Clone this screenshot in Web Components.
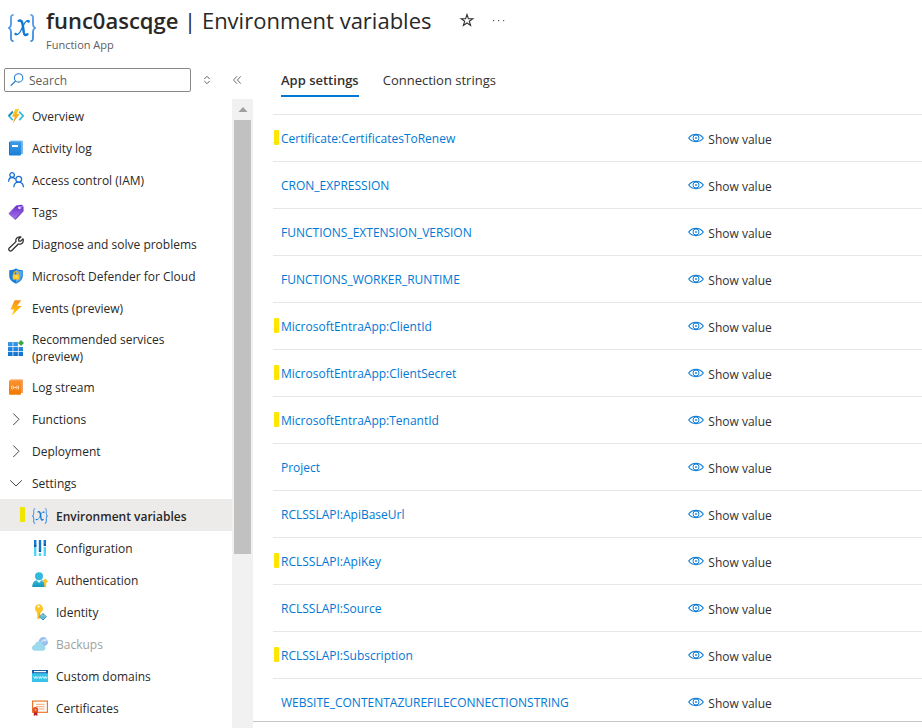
<!DOCTYPE html>
<html lang="en">
<head>
<meta charset="utf-8">
<title>func0ascqge | Environment variables</title>
<style>
  body { margin: 0; background: #fff; color: #292827; font: 12px/16px "Open Sans", "Noto Sans", sans-serif; }
</style>
</head>
<body>
<function-app-page></function-app-page>

<script>
const ICONS = {
  braces: ['0 0 30 30', `<defs><linearGradient id="g" x2="0" y2="1"><stop stop-color="#5ea0ef"/><stop offset="1" stop-color="#3b8be0"/></linearGradient></defs>
    <g fill="none" stroke="url(#g)" stroke-width="2"><path d="M6 1C3.500 1 3.200 2 3.200 4.500V11c0 2-.6 3.200-2.200 4 1.600.8 2.200 2 2.200 4v6.500C3.200 28 3.500 29 6 29"/><path d="M24 1c2.500 0 2.800 1 2.800 3.500V11c0 2 .6 3.200 2.200 4-1.600.8-2.200 2-2.200 4v6.500c0 2.500-.3 3.500-2.800 3.500"/></g>
    <g fill="none" stroke="#0f78d4" stroke-linecap="round"><path stroke-width="2.600" d="M11.500 7.300c2.500-1.200 3.600.6 4.200 4l1.200 8.200c.6 3 1.700 4 3.900 2.200"/><path stroke-width="1.400" d="M22.500 7.600c-2.500-1.400-4.300 1.200-6.300 5.300l-2.400 4.800c-1.900 3.600-3.500 5-5.600 4.200"/></g><circle cx="22" cy="8" r="1.400" fill="#0f78d4"/><circle cx="8.200" cy="21.500" r="1.400" fill="#0f78d4"/>`],
  overview: ['0 0 16 16', `<defs><linearGradient id="g" x2="0" y2="1"><stop stop-color="#ffd02e"/><stop offset="1" stop-color="#f58a00"/></linearGradient></defs><path d="M4.800 3.600.8 7.900l4 4.300M11.200 3.600l4 4.300-4 4.300" fill="none" stroke="#32bedd" stroke-width="1.700"/><path d="M4.800 3.600.8 7.900" stroke="#198ab3" stroke-width="1.700"/><path d="M7.200 1h4L8.700 5.800h3.100L5 15l1.900-6.200H4.200z" fill="url(#g)"/>`],
  activity: ['0 0 16 16', `<defs><linearGradient id="g" x2="0" y2="1"><stop stop-color="#3a9be8"/><stop offset="1" stop-color="#1a7fd6"/></linearGradient></defs><path d="M2.500.5H14a.8.8 0 0 1 .8.8V14H3z" fill="#86c5f0"/><path d="M14 1.500V14" stroke="#5a9fd6"/><rect x="1" y="1.500" width="12" height="14" rx="1" fill="url(#g)"/><path d="M1.500 2.200v12.500" stroke="#1b74c4"/><rect x="4" y="5" width="6" height="2" fill="#fff"/>`],
  access: ['0 0 16 16', `<g fill="none" stroke="#1b6fd1" stroke-width="1.300"><circle cx="4.100" cy="3" r="2.300"/><path d="M.6 9.800C.7 7 2.200 5.500 4 5.500c1.300 0 2.400.6 3.100 1.700"/><circle cx="10.700" cy="7.200" r="2.900"/><path d="M5.800 15.300c.1-3.200 2.200-5.100 4.900-5.100s4.800 1.900 4.700 5.100"/></g>`],
  tags: ['0 0 16 16', `<defs><linearGradient id="g" x2="0" y2="1"><stop stop-color="#6a29cf"/><stop offset="1" stop-color="#a67ae6"/></linearGradient></defs><path d="M8.200 1.400 13.400.7l1.700 1.200.2 5.300-7.600 8.300a.8.800 0 0 1-1.100 0L1 10.200a.8.800 0 0 1 0-1.100z" fill="url(#g)"/><path d="m14 1.200 1.500 1.200v4.800L7.800 15.500l-1-.4 7.200-8z" fill="#7b48c4"/><circle cx="11.500" cy="3.700" r="1.300" fill="#fff"/><path d="M11.500 3.700 15 2" stroke="#b796f9"/>`],
  wrench: ['0 0 16 16', `<path d="M11.500.8c-2.600.1-4.200 2.300-3.500 4.800L1.300 12a1.700 1.700 0 0 0 0 2.500 1.800 1.800 0 0 0 2.500 0L10.300 8c2.600.8 4.900-1 5-3.600 0-.6-.1-1.100-.3-1.600l-2.300 2.300-1.900-.1-.2-2L12.900.9z" fill="none" stroke="#323130" stroke-width="1.300" stroke-linejoin="round"/>`],
  shield: ['0 0 16 16', `<path d="M8 .3c2 1.500 4 1.900 6.800 2v5.200c0 4-3 6.500-6.800 8.200-3.800-1.700-6.800-4.200-6.800-8.200V2.300C4 2.200 6 1.800 8 .3z" fill="#1b7fd6"/><path d="M8 1.400c1.800 1.100 3.500 1.600 5.800 1.700v4.500c0 3.300-2.400 5.500-5.800 7z" fill="#58a8ef"/><path d="M6 7V5.600C6 3 10 3 10 5.600V7" fill="none" stroke="#f2b01e" stroke-width="1.300"/><rect x="4.700" y="6.500" width="6.600" height="5" rx=".6" fill="#ffca28"/><circle cx="8" cy="8.600" r=".8" fill="#fff3b0"/>`],
  bolt: ['0 0 16 16', `<defs><linearGradient id="g" x2="0" y2="1"><stop stop-color="#f78d1e"/><stop offset="1" stop-color="#ffd400"/></linearGradient></defs><path d="M6.600.2h6.600L9.200 6h4.600L3.600 15.800l2.600-6.400H2.500z" fill="url(#g)"/>`],
  grid: ['0 0 16 16', `<defs><linearGradient id="g" gradientUnits="userSpaceOnUse" x1="0" y1="1" x2="0" y2="16"><stop stop-color="#3ba0ea"/><stop offset="1" stop-color="#0f6fcc"/></linearGradient></defs><path d="M0 2h4.600v4.300H0zM5.300 2h4.600v4.300H5.300zM0 7h4.600v4.300H0zM5.300 7h4.600v4.300H5.300zM10.600 7h4.400v4.300h-4.400zM0 12h4.600v4H0zM5.300 12h4.600v4H5.300zM10.600 12h4.400v4h-4.400z" fill="url(#g)"/><path d="m13 0 3 3-3 3-3-3z" fill="#3fa648"/>`],
  log: ['0 0 16 16', `<defs><linearGradient id="g" x2="0" y2="1"><stop stop-color="#fb9230"/><stop offset="1" stop-color="#f07800"/></linearGradient></defs><path d="M2.500.3H14a.8.8 0 0 1 .8.8V14H3z" fill="#f9b57c"/><path d="M14 1v13" stroke="#e08030"/><rect x="1" y="1.300" width="12" height="14.400" rx="1" fill="url(#g)"/><path d="M4.300 6.500c-1 1.200-1 2.700 0 4M5.700 7.200c-.6.8-.6 1.800 0 2.600M9.900 6.500c1 1.200 1 2.700 0 4M8.500 7.200c.6.8.6 1.800 0 2.600" fill="none" stroke="#fff" stroke-width=".9"/><circle cx="7.100" cy="8.500" r=".8" fill="#fff"/>`],
  right: ['0 0 16 16', `<path d="m5.300 2.500 5.700 5.800L5.300 14" fill="none" stroke="#484644" stroke-width="1"/>`],
  down: ['0 0 16 16', `<path d="m2.200 5.300 5.800 5.700 5.800-5.700" fill="none" stroke="#484644" stroke-width="1"/>`],
  config: ['0 0 16 16', `<path d="M2 0h2.400v6H2zM11.600 0H14v4h-2.400zM6.800 0h2.400v10H6.800z" fill="#1577cf"/><path d="M2 7h2.400v9H2zM6.800 13h2.400v3H6.800zM11.600 7H14v9h-2.400z" fill="#50d4f2"/><path d="M2 5h2.400v2H2zM11.600 4H14v2h-2.400zM6.800 10h2.400v2H6.800z" fill="#0b5cab"/>`],
  person: ['0 0 16 16', `<defs><linearGradient id="g" x2="0" y2="1"><stop stop-color="#35bde0"/><stop offset="1" stop-color="#1595bb"/></linearGradient></defs><path d="M.2 15c.2-4 1.600-6.500 4-6.800h5.500c2.300.3 3.400 2.500 3.800 6.800z" fill="url(#g)"/><path d="m4.500 8 2.500 3 2.500-3z" fill="#fff"/><circle cx="7" cy="4.200" r="4" fill="#32b9dc"/><path d="M13.200 6.500 16 9.300l-1.800 1.800v3.200l-1 1.300-1-1.300v-3.200l-1.800-1.800z" fill="#ffc522"/>`],
  key: ['0 0 16 16', `<path d="M6.600.2a4.400 4.400 0 0 1 2.600 7.900L8.400 9v4.600L6.600 15.500l-1.800-1.600.9-1-1-1 1-1-.8-1V8.200A4.400 4.400 0 0 1 6.600.2z" fill="#ffc522"/><circle cx="6.600" cy="2.600" r="1.100" fill="#fff"/><path d="M7.600 9v5" stroke="#e9a000" stroke-width=".8"/><path d="m11 9.500 3.400 3.200L11 16l-3.400-3.200z" fill="#bfe8f7" stroke="#2392be"/><path d="M11 10v5.500M8.300 13h5.400" stroke="#2392be" stroke-width=".8"/>`],
  cloud: ['0 0 16 16', `<path d="M6.500 5.600C7 2.700 9.200 1 11.500 1c2.200 0 3.400 1.500 3.700 3.400.7.600.8 1.600.7 3-1 2-3 2.600-4.500 2.600z" fill="#9cc0ee"/><path d="M9.500 6.500c.5-2.300 2.200-3.300 4-2.400m.3-1.600v2.300h-2.300" fill="none" stroke="#e5f0fb"/><path d="M3.200 14.800C1 14.700 0 13.400 0 11.900c0-1.600 1-2.700 2.700-2.900C3.100 6.900 4.700 5.600 6.700 5.600c2.300 0 4 1.600 4.200 3.700 1.600.2 2.600 1.300 2.600 2.800 0 1.600-1.200 2.700-2.900 2.700z" fill="#9bd9ed"/>`],
  domains: ['0 0 16 16', `<rect y="2" width="16" height="12" rx=".6" fill="#38c4ea"/><path d="M0 2h16v3.200H0z" fill="#1b5fa8"/><path d="M2 3.600h12" stroke="#fff" stroke-width="1.200"/><path d="m1.800 8.500 1 2 1-2 1 2 1-2m.8 0 1 2 .8-2 1 2 1-2m.8 0 1 2 1-2 1 2 1-2" fill="none" stroke="#e5faff" stroke-width=".9"/>`],
  certificate: ['0 0 16 16', `<rect x=".6" y="1.100" width="14.800" height="11.200" fill="#fff" stroke="#e8792b" stroke-width="1.200"/><path d="M4 4.300h8.500M4 6.700h8.500M7 9h5.500" stroke="#f3a66b"/><path d="M1.800 11v5l1.800-1 1.800 1v-5z" fill="#b51e1e"/><circle cx="3.500" cy="9.800" r="2.800" fill="#e64b31"/><circle cx="3.500" cy="9.800" r="1" fill="#ff9e7f"/>`],
  star: ['0 0 16 16', `<path d="m8 2.500 1.400 4.200h4.400L10.300 9.200l1.300 4.300L8 11 4.400 13.500l1.300-4.300L2.200 6.700h4.400z" fill="none" stroke="#323130" stroke-width="1.100"/>`],
  dots: ['0 0 16 16', `<g fill="#605e5c"><rect x="2" y="8" width="1.200" height="1.200"/><rect x="7" y="8" width="1.200" height="1.200"/><rect x="12" y="8" width="1.200" height="1.200"/></g>`],
  search: ['0 0 16 16', `<circle cx="9.600" cy="5.900" r="4.200" fill="none" stroke="#2a7fcb" stroke-width="1.100"/><path d="M6.600 9 1.700 13.800" stroke="#2a7fcb" stroke-width="1.200"/>`],
  sort: ['0 0 16 16', `<path d="m5.300 7 2.700-2.700L10.700 7M5.300 9l2.700 2.700L10.700 9" fill="none" stroke="#605e5c" stroke-width="1"/>`],
  collapse: ['0 0 16 16', `<path d="M8 4.300 4.500 8 8 11.700M11.800 4.300 8.300 8l3.500 3.700" fill="none" stroke="#605e5c" stroke-width=".9"/>`],
  eye: ['0 0 16 16', `<path d="M.7 8C2.500 5.500 5 4.400 8 4.400S13.500 5.500 15.300 8C13.500 10.500 11 11.600 8 11.600S2.500 10.500.7 8z" fill="none" stroke="#1580d8" stroke-width="1.200"/><circle cx="8" cy="8" r="3" fill="none" stroke="#1580d8" stroke-width="1"/><circle cx="8" cy="8" r=".9" fill="#1580d8"/>`],
  arrow: ['0 0 16 16', `<path d="M3.500 10.500h9L8 5.500z" fill="#a0a0a0"/>`]
};

function define(name, render, setup) {
  customElements.define(name, class extends HTMLElement {
    connectedCallback() {
      if (this.shadowRoot) return;
      const template = document.createElement('template');
      template.innerHTML = render(this);
      this.attachShadow({ mode: 'open' }).append(template.content.cloneNode(true));
      if (setup) setup(this);
    }
  });
}

define('az-icon', el => {
  const [box, shapes] = ICONS[el.getAttribute('name')];
  return `<style>:host{display:block;flex:none;width:16px;height:16px}svg{display:block;width:100%;height:100%}</style>
  <svg viewBox="${box}" aria-hidden="true">${shapes}</svg>`;
});

define('az-icon-button', el => `
  <style>
    :host { display: block; flex: none; }
    button { display: block; border: 0; padding: 0; background: none; cursor: pointer; }
  </style>
  <button type="button" aria-label="${el.getAttribute('label')}"><az-icon name="${el.getAttribute('icon')}"></az-icon></button>`);

define('page-header', () => `
  <style>
    :host { display: flex; align-items: flex-start; gap: 10px; padding: 4px 8px 0; height: 56px; }
    az-icon { width: 28px; height: 28px; margin-top: 10px; }
    .row { display: flex; align-items: center; gap: 16px; }
    h1 { margin: 0 11px 0 0; font-size: 22px; line-height: 32px; font-weight: 400; white-space: nowrap; }
    b { font-weight: 600; }
    p { margin: 0; font-size: 11px; line-height: 18px; color: #605e5c; }
  </style>
  <az-icon name="braces"></az-icon>
  <div>
    <div class="row"><h1><b><slot name="app"></slot></b> | <slot name="page"></slot></h1>
      <az-icon-button icon="star" label="Add to favorites"></az-icon-button>
      <az-icon-button icon="dots" label="More"></az-icon-button></div>
    <p><slot name="kind"></slot></p>
  </div>`);

define('menu-search', () => `
  <style>
    :host { display: flex; align-items: center; gap: 8px; padding: 8px 8px 7px 4px; }
    label { flex: 1; min-width: 0; display: flex; align-items: center; gap: 4px; box-sizing: border-box; height: 24px; padding: 0 4px; border: 1px solid #8a8886; border-radius: 2px; }
    input { flex: 1; min-width: 0; border: 0; outline: 0; padding: 1px 0 0; background: none; font: inherit; color: inherit; }
    input::placeholder { color: #605e5c; opacity: 1; }
    div { display: flex; gap: 14px; }
  </style>
  <label><az-icon name="search"></az-icon><input type="text" placeholder="Search" aria-label="Search"></label>
  <div><az-icon-button icon="sort" label="Expand or collapse groups"></az-icon-button>
  <az-icon-button icon="collapse" label="Collapse menu"></az-icon-button></div>`);

define('menu-item', el => `
  <style>
    :host { display: block; position: relative; }
    a { display: flex; align-items: center; gap: 8px; box-sizing: border-box; min-height: 32px; padding: 0 24px 0 8px; color: inherit; text-decoration: none; line-height: 17px; }
    :host([wrap]) a { min-height: 47px; }
    :host([child]) a { padding: 2px 24px 0 32px; }
    :host([current]) a { background: #edebe9; font-weight: 600; }
    :host([disabled]) a { color: #a19f9d; }
    i { position: absolute; left: 20px; top: 8px; width: 5px; height: 15px; background: #efe600; border-radius: 1px; }
  </style>
  <a href="#"${el.hasAttribute('current') ? ' aria-current="page"' : ''}${el.hasAttribute('disabled') ? ' aria-disabled="true"' : ''}><az-icon name="${el.getAttribute('icon')}"></az-icon><span><slot></slot></span></a>
  ${el.hasAttribute('current') ? '<i></i>' : ''}`);

define('menu-scrollbar', () => `
  <style>
    :host { display: flex; flex-direction: column; align-items: stretch; flex: none; width: 17px; padding: 0 2px; background: #f1f1f1; }
    az-icon { align-self: center; height: 21px; }
    .thumb { height: 69%; background: #c1c1c1; }
  </style>
  <az-icon name="arrow"></az-icon><div class="thumb"></div>`);

define('side-menu', () => `
  <style>
    :host { display: flex; flex-direction: column; flex: none; width: 253px; min-height: 0; }
    .body { flex: 1; min-height: 0; display: flex; overflow: hidden; }
    nav { flex: 1; min-width: 0; padding-top: 1px; }
  </style>
  <menu-search></menu-search>
  <div class="body"><nav aria-label="Resource menu"><slot></slot></nav><menu-scrollbar></menu-scrollbar></div>`);

define('tab-strip', () => `
  <style>
    :host { display: flex; gap: 24px; padding: 8px 28px 0; }
    button { border: 0; border-bottom: 2px solid transparent; padding: 4px 0 7px; background: none; font: inherit; font-size: 13px; line-height: 16px; color: #323130; cursor: pointer; white-space: nowrap; }
    button[aria-selected=true] { font-weight: 600; border-color: #0078d4; }
  </style>
  <button type="button" role="tab" aria-selected="true">App settings</button>
  <button type="button" role="tab" aria-selected="false">Connection strings</button>`,
  el => el.setAttribute('role', 'tablist'));

define('show-value', () => `
  <style>
    :host { display: block; }
    button { display: flex; align-items: flex-start; gap: 4px; border: 0; padding: 0; background: none; font: inherit; color: #323130; cursor: pointer; }
    span { padding-top: 2px; }
  </style>
  <button type="button"><az-icon name="eye"></az-icon><span>Show value</span></button>`);

const SETTINGS = [
  ['Certificate:CertificatesToRenew', true], ['CRON_EXPRESSION'], ['FUNCTIONS_EXTENSION_VERSION'],
  ['FUNCTIONS_WORKER_RUNTIME'], ['MicrosoftEntraApp:ClientId', true], ['MicrosoftEntraApp:ClientSecret', true],
  ['MicrosoftEntraApp:TenantId', true], ['Project'], ['RCLSSLAPI:ApiBaseUrl'], ['RCLSSLAPI:ApiKey', true],
  ['RCLSSLAPI:Source'], ['RCLSSLAPI:Subscription', true], ['WEBSITE_CONTENTAZUREFILECONNECTIONSTRING']
];

define('settings-table', () => `
  <style>
    :host { display: block; flex: 1; min-height: 0; overflow: hidden; margin: 17px 0 6px; padding-left: 20px; border-bottom: 1px solid #c8c6c4; }
    table { width: 100%; border-collapse: separate; border-spacing: 0; table-layout: fixed; }
    th, td { box-sizing: border-box; height: 47px; border-top: 1px solid #e6e6e6; text-align: left; vertical-align: top; font-weight: 400; }
    th { position: relative; width: 64%; padding: 16px 0 0 8px; }
    td { padding: 15px 0 0; }
    a { color: #0078d4; text-decoration: none; }
    i { position: absolute; left: 1px; top: 15px; width: 5px; height: 15px; background: #ffe600; border-radius: 1px; }
  </style>
  <table aria-label="App settings"><tbody>${SETTINGS.map(([name, marked]) => `
    <tr><th scope="row"><a href="#">${name}</a>${marked ? '<i></i>' : ''}</th><td><show-value></show-value></td></tr>`).join('')}
  </tbody></table>`);

define('function-app-page', () => `
  <style>
    :host { display: flex; flex-direction: column; height: 100vh; overflow: hidden; }
    .body { flex: 1; min-height: 0; display: flex; }
    main { flex: 1; min-width: 0; display: flex; flex-direction: column; }
  </style>
  <page-header><span slot="app">func0ascqge</span><span slot="page">Environment variables</span><span slot="kind">Function App</span></page-header>
  <div class="body">
    <side-menu>
      <menu-item icon="overview">Overview</menu-item>
      <menu-item icon="activity">Activity log</menu-item>
      <menu-item icon="access">Access control (IAM)</menu-item>
      <menu-item icon="tags">Tags</menu-item>
      <menu-item icon="wrench">Diagnose and solve problems</menu-item>
      <menu-item icon="shield">Microsoft Defender for Cloud</menu-item>
      <menu-item icon="bolt">Events (preview)</menu-item>
      <menu-item icon="grid" wrap>Recommended services (preview)</menu-item>
      <menu-item icon="log">Log stream</menu-item>
      <menu-item icon="right">Functions</menu-item>
      <menu-item icon="right">Deployment</menu-item>
      <menu-item icon="down">Settings</menu-item>
      <menu-item icon="braces" child current>Environment variables</menu-item>
      <menu-item icon="config" child>Configuration</menu-item>
      <menu-item icon="person" child>Authentication</menu-item>
      <menu-item icon="key" child>Identity</menu-item>
      <menu-item icon="cloud" child disabled>Backups</menu-item>
      <menu-item icon="domains" child>Custom domains</menu-item>
      <menu-item icon="certificate" child>Certificates</menu-item>
    </side-menu>
    <main><tab-strip></tab-strip><settings-table></settings-table></main>
  </div>`);
</script>
</body>
</html>
